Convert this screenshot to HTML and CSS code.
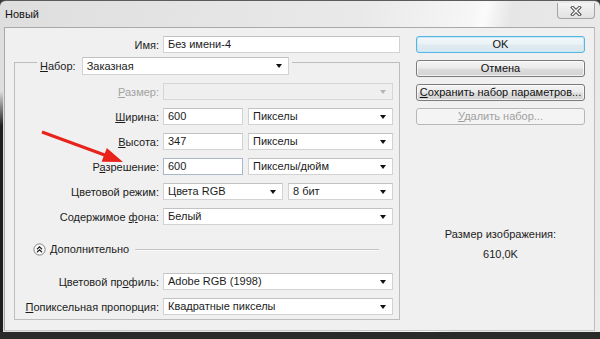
FILE: index.html
```html
<!DOCTYPE html>
<html lang="ru">
<head>
<meta charset="utf-8">
<title>Новый</title>
<link rel="stylesheet" href="styles.css">
</head>
<body>
<div class="desk">
  <div class="window">
    <div class="titlebar">
      <span class="title">Новый</span>
      <div class="close">
        <svg width="12" height="10" viewBox="0 0 12 10"><path d="M2.5 1.5 L9.5 8.5 M9.5 1.5 L2.5 8.5" stroke="#4a4a4a" stroke-width="3.2" stroke-linecap="square" fill="none"/><path d="M2.5 1.5 L9.5 8.5 M9.5 1.5 L2.5 8.5" stroke="#ffffff" stroke-width="1.3" stroke-linecap="square" fill="none"/></svg>
      </div>
    </div>
    <div class="panel">
      <div class="form">
        <div class="name-row">
          <span class="lbl">Имя:</span>
          <div class="input">Без имени-4</div>
        </div>
        <div class="group">
          <div class="group-head">
            <span class="lbl"><span class="ak">Н</span>абор:</span>
            <div class="select preset"><span>Заказная</span><span class="caret"></span></div>
          </div>
          <div class="row">
            <span class="lbl disabled"><span class="ak">Р</span>азмер:</span>
            <div class="select off"><span></span><span class="caret"></span></div>
          </div>
          <div class="row">
            <span class="lbl"><span class="ak">Ш</span>ирина:</span>
            <div class="pair">
              <div class="input num">600</div>
              <div class="select grow"><span>Пикселы</span><span class="caret"></span></div>
            </div>
          </div>
          <div class="row">
            <span class="lbl"><span class="ak">В</span>ысота:</span>
            <div class="pair">
              <div class="input num">347</div>
              <div class="select grow"><span>Пикселы</span><span class="caret"></span></div>
            </div>
          </div>
          <div class="row">
            <span class="lbl">Р<span class="ak">а</span>зрешение:</span>
            <div class="pair">
              <div class="input num focus">600</div>
              <div class="select grow"><span>Пикселы/дюйм</span><span class="caret"></span></div>
            </div>
          </div>
          <div class="row">
            <span class="lbl">Цветовой режим:</span>
            <div class="pair">
              <div class="select mode"><span>Цвета RGB</span><span class="caret"></span></div>
              <div class="select grow"><span>8 бит</span><span class="caret"></span></div>
            </div>
          </div>
          <div class="row">
            <span class="lbl">Содержимое <span class="ak">ф</span>она:</span>
            <div class="select"><span>Белый</span><span class="caret"></span></div>
          </div>
          <div class="section">
            <svg class="toggle" width="13" height="13" viewBox="0 0 13 13"><circle cx="6.5" cy="6.5" r="5.6" fill="#fbfbfb" stroke="#808080" stroke-width="1"/><path d="M4 6.2 L6.5 3.8 L9 6.2 M4 9.2 L6.5 6.8 L9 9.2" stroke="#222" stroke-width="1.2" fill="none"/></svg>
            <span class="sec-title">Дополнительно</span>
            <span class="sec-line"></span>
          </div>
          <div class="row">
            <span class="lbl">Цветовой пр<span class="ak">о</span>филь:</span>
            <div class="select"><span>Adobe RGB (1998)</span><span class="caret"></span></div>
          </div>
          <div class="row">
            <span class="lbl"><span class="ak">П</span>опиксельная пропорция:</span>
            <div class="select"><span>Квадратные пикселы</span><span class="caret"></span></div>
          </div>
        </div>
      </div>
      <div class="side">
        <div class="btn default">OK</div>
        <div class="btn">Отмена</div>
        <div class="btn"><span class="ak">С</span>охранить набор параметров...</div>
        <div class="btn dis"><span class="ak">У</span>далить набор...</div>
        <div class="size-info">
          <div>Размер изображения:</div>
          <div>610,0K</div>
        </div>
      </div>
    </div>
  </div>
  <svg class="arrow" width="130" height="170" viewBox="0 0 130 170"><line x1="42" y1="132" x2="106" y2="155.5" stroke="#e8231c" stroke-width="3"/><polygon points="123,162 101.6,161.8 106.8,148" fill="#e8231c"/></svg>
</div>
</body>
</html>
```
FILE: styles.css
```css
* { box-sizing: border-box; }
html, body { margin: 0; padding: 0; }
body {
  width: 600px;
  height: 339px;
  overflow: hidden;
  background: #1b1b1b;
  font-family: "Liberation Sans", Arial, sans-serif;
  font-size: 11px;
  color: #1c1c1c;
}
.desk {
  position: relative;
  width: 600px;
  height: 339px;
  padding-bottom: 7px;
  background: linear-gradient(#3a3a3a, #141414 40%, #2a2a2a);
}
.window {
  height: 332px;
  display: flex;
  flex-direction: column;
  padding-bottom: 1px;
  border-radius: 6px 6px 0 0;
  border-top: 1px solid #5c5c5c;
  background:
    linear-gradient(to bottom, rgba(30,30,30,0) 90px, #1f1f1f 125px) left top / 3px 100% no-repeat,
    linear-gradient(100deg, #dedede 0%, #e9e9e9 55%, #f6f6f6 72%, #fbfbfb 74%, #e6e6e6 78%, #ebebeb 100%);
}
.titlebar {
  height: 26px;
  display: flex;
  justify-content: space-between;
  align-items: flex-start;
}
.title {
  padding: 7px 0 0 5px;
  color: #111;
  font-size: 11px;
}
.close {
  margin: 2px 5px 0 0;
  width: 38px;
  height: 16px;
  border: 1px solid #a4a4a4;
  border-top: none;
  border-radius: 0 0 4px 4px;
  background: linear-gradient(#f4f4f4, #e2e2e2);
  display: flex;
  align-items: center;
  justify-content: center;
}
.panel {
  flex: 1;
  margin: 0 5px 0 4px;
  display: flex;
  padding: 8px 9px 0 0;
  border: 1px solid #a9a9a9;
  border-right-color: #bdbdbd;
  border-bottom-color: #c9c9c9;
  background: #f0f0f0;
}
.form {
  width: 395px;
  display: flex;
  flex-direction: column;
}
.name-row {
  display: grid;
  grid-template-columns: 154px 237px;
  column-gap: 4px;
  align-items: center;
  height: 17px;
}
.lbl {
  text-align: right;
  white-space: nowrap;
  color: #1c1c1c;
}
.lbl.disabled { color: #a2a2a2; }
.ak { text-decoration: underline; text-underline-offset: 1px; }
.input, .select {
  height: 17px;
  background: #fff;
  border: 1px solid #d2d2d2;
  border-top-color: #c2c2c2;
  padding-left: 4px;
  line-height: 15px;
  white-space: nowrap;
  color: #1c1c1c;
}
.input.focus { border-color: #a8b8c8; }
.select {
  display: flex;
  justify-content: space-between;
  align-items: center;
}
.caret {
  width: 0;
  height: 0;
  margin-right: 6px;
  border-left: 3.5px solid transparent;
  border-right: 3.5px solid transparent;
  border-top: 4px solid #111;
}
.select.off { background: #efefef; border-color: #d6d6d6; }
.select.off .caret { border-top-color: #b5b5b5; }
.group {
  margin: 9px 0 0 9px;
  width: 386px;
  border: 1px solid #bdbdbd;
  display: flex;
  flex-direction: column;
  gap: 8px;
  padding: 0 6px 4px 0;
}
.group-head {
  align-self: flex-start;
  margin: -6px 0 0 22px;
  padding: 0 3px;
  background: #f0f0f0;
  display: flex;
  align-items: center;
  gap: 6px;
}
.select.preset { width: 207px; height: 18px; }
.row {
  display: grid;
  grid-template-columns: 144px 1fr;
  column-gap: 4px;
  align-items: center;
  height: 17px;
}
.pair {
  display: flex;
  gap: 5px;
}
.input.num { width: 80px; }
.select.mode { width: 120px; }
.grow { flex: 1; }
.section {
  height: 32px;
  display: flex;
  align-items: center;
  padding-left: 18px;
}
.toggle { flex: none; }
.sec-title { margin-left: 4px; }
.sec-line {
  flex: 1;
  height: 1px;
  margin: 1px 14px 0 6px;
  background: #c4c4c4;
  box-shadow: 0 1px 0 #fafafa;
}
.side {
  width: 169px;
  margin-left: 16px;
  display: flex;
  flex-direction: column;
  gap: 7px;
}
.btn {
  height: 17px;
  border: 1px solid #7b7b7b;
  border-radius: 3px;
  background: linear-gradient(#f3f3f3 0%, #ebebeb 48%, #dddddd 52%, #d3d3d3 100%);
  box-shadow: inset 0 0 0 1px rgba(255,255,255,0.7);
  text-align: center;
  line-height: 15px;
  color: #111;
  white-space: nowrap;
}
.btn.default {
  border-color: #58b4e2;
  background: linear-gradient(#f2f7fa 0%, #eaf2f6 48%, #e0ebf1 52%, #dae7ee 100%);
  box-shadow: inset 0 0 0 1px #c6e8f8;
}
.btn.dis {
  border-color: #b4b8bb;
  background: #f4f4f4;
  box-shadow: none;
  color: #a0a0a0;
}
.size-info {
  margin-top: 92px;
  text-align: center;
  line-height: 20px;
  color: #1c1c1c;
}
.arrow {
  position: absolute;
  left: 0;
  top: 0;
  pointer-events: none;
}
```
